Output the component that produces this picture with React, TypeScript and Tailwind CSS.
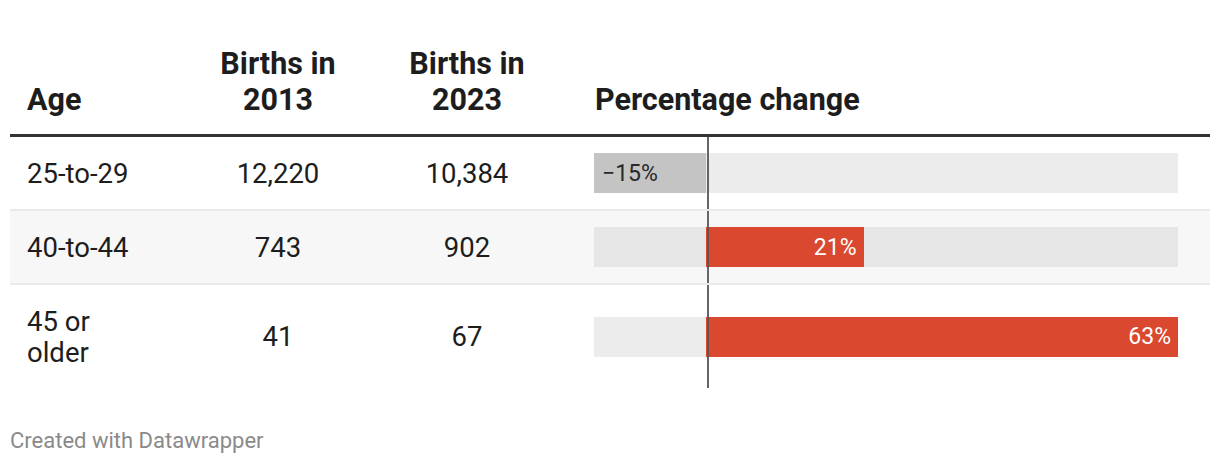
const MIN = -15;
const MAX = 63;
const SPAN = MAX - MIN;

type Row = {
  age: string;
  y2013: string;
  y2023: string;
  change: number;
};

const rows: Row[] = [
  { age: "25-to-29", y2013: "12,220", y2023: "10,384", change: -15 },
  { age: "40-to-44", y2013: "743", y2023: "902", change: 21 },
  { age: "45 or older", y2013: "41", y2023: "67", change: 63 },
];

const zeroPct = ((0 - MIN) / SPAN) * 100;

function ChangeBar({ value, shaded }: { value: number; shaded: boolean }) {
  const neg = value < 0;
  const width = (Math.abs(value) / SPAN) * 100;
  const left = neg ? zeroPct - width : zeroPct;
  const label = neg ? `\u2212${Math.abs(value)}%` : `${value}%`;
  return (
    <div className={`relative h-[40px] w-full ${shaded ? "bg-[#e6e6e6]" : "bg-[#ececec]"}`}>
      <div
        className={`absolute top-0 bottom-0 flex items-center ${
          neg
            ? "justify-start bg-[#c4c4c4] pl-[8px] text-[#2a2a2a]"
            : "justify-end bg-[#d9482f] pr-[7px] text-white"
        } text-[23px] leading-none`}
        style={{ left: `${left}%`, width: `${width}%` }}
      >
        {label}
      </div>
    </div>
  );
}

export default function App() {
  return (
    <div className="min-h-[466px] w-[1220px] bg-white font-['Roboto',sans-serif] text-[#1d1d1d]">
      <div className="px-[10px] pt-[46px]">
        {/* header */}
        <div className="flex items-end border-b-[3px] border-[#333333] pb-[16px] text-[30.5px] leading-[36px] font-bold">
          <div className="w-[175px] pl-[17px]">Age</div>
          <div className="w-[186px] text-center">
            Births in
            <br />
            2013
          </div>
          <div className="w-[192px] text-center">
            Births in
            <br />
            2023
          </div>
          <div className="flex-1 pl-[32px]">Percentage change</div>
        </div>

        {/* rows */}
        {rows.map((r, i) => {
          const shaded = i === 1;
          const last = i === rows.length - 1;
          return (
            <div
              key={r.age}
              className={`flex items-stretch text-[27.5px] leading-[31px] ${
                shaded ? "bg-[#f7f7f7]" : ""
              } ${last ? "" : "border-b-2 border-[#e9e9e9]"}`}
            >
              <div className="flex w-[175px] items-center py-[20.5px] pl-[17px]">
                <span className="max-w-[110px]">{r.age}</span>
              </div>
              <div className="flex w-[186px] items-center justify-center py-[20.5px]">{r.y2013}</div>
              <div className="flex w-[192px] items-center justify-center py-[20.5px]">{r.y2023}</div>
              <div className="relative flex flex-1 items-center pr-[32px] pl-[31px]">
                <ChangeBar value={r.change} shaded={shaded} />
                <div className="absolute top-0 bottom-0 left-[144px] w-[1.5px] bg-[#555555]/90" />
              </div>
            </div>
          );
        })}

        {/* footer */}
        <div className="mt-[40px] text-[22px] leading-[26px] text-[#8a8a8a]">Created with Datawrapper</div>
      </div>
    </div>
  );
}
